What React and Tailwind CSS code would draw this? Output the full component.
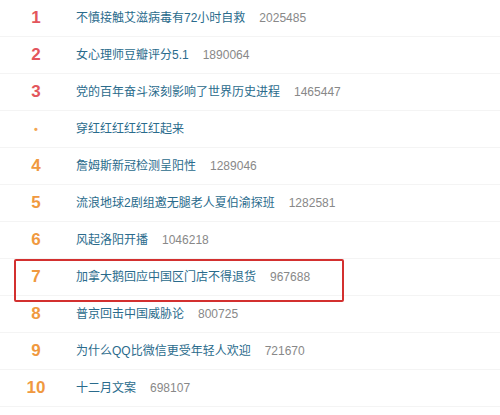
const items = [
    { rank: '1', title: '不慎接触艾滋病毒有72小时自救', count: '2025485', top: true },
    { rank: '2', title: '女心理师豆瓣评分5.1', count: '1890064', top: true },
    { rank: '3', title: '党的百年奋斗深刻影响了世界历史进程', count: '1465447', top: true },
    { rank: '•', title: '穿红红红红红红起来', count: '', dot: true },
    { rank: '4', title: '詹姆斯新冠检测呈阳性', count: '1289046' },
    { rank: '5', title: '流浪地球2剧组邀无腿老人夏伯渝探班', count: '1282581' },
    { rank: '6', title: '风起洛阳开播', count: '1046218' },
    { rank: '7', title: '加拿大鹅回应中国区门店不得退货', count: '967688', marked: true },
    { rank: '8', title: '普京回击中国威胁论', count: '800725' },
    { rank: '9', title: '为什么QQ比微信更受年轻人欢迎', count: '721670' },
    { rank: '10', title: '十二月文案', count: '698107' },
];

export default function App() {
    return (
        <div
            className="w-[500px] h-[415px] bg-white overflow-hidden relative"
            style={{ fontFamily: '"Liberation Sans", "Noto Sans CJK SC", sans-serif' }}
        >
            {items.map((item) => (
                <div key={item.rank + item.title} className="relative h-[37px] flex items-center border-b border-[#f4f4f4]">
                    <div
                        className={`w-[72px] text-center font-semibold ${
                            item.dot
                                ? 'text-[11px] text-[#f2a552]'
                                : item.top
                                    ? 'text-[17px] text-[#e3565c]'
                                    : 'text-[17px] text-[#f0993f]'
                        }`}
                    >
                        {item.rank}
                    </div>
                    <span className="ml-[4px] text-[12px] text-[#2a6b8c]">{item.title}</span>
                    {item.count && <span className="ml-[14px] text-[12px] text-[#888888]">{item.count}</span>}
                    {item.marked && (
                        <div className="absolute left-[14px] top-0 w-[330px] h-[43px] border-2 border-[#d3302f] rounded-[2px]" />
                    )}
                </div>
            ))}
        </div>
    );
}
